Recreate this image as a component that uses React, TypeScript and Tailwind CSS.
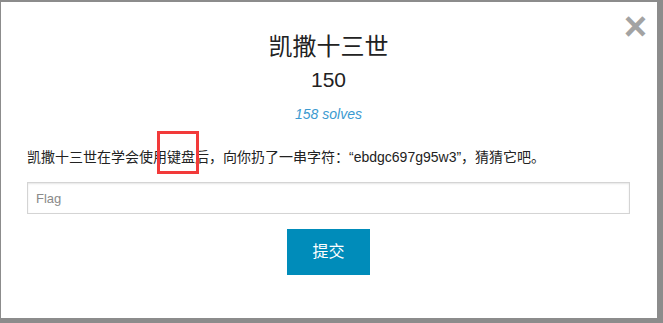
import React from "react";

const fontStack = {
  fontFamily: '"Liberation Sans", "Noto Sans CJK SC", sans-serif',
};

export default function App() {
  return (
    <div
      className="w-[663px] h-[323px] overflow-hidden bg-[#8c8c8c] pt-[2px] pl-px"
      style={fontStack}
    >
      {/* modal */}
      <div className="relative w-[656px] h-[316px] bg-white pt-[30px] pl-[26px] pr-[27px] text-[#222]">
        <button className="absolute top-[4px] right-[10px] text-[40px] leading-none font-bold text-[#a3a3a3] cursor-pointer">
          ×
        </button>

        <h3 className="text-center text-[24px] leading-[30px]">凯撒十三世</h3>
        <p className="mt-[5px] text-center text-[21px] leading-[26px]">150</p>
        <p className="mt-[11px] text-center text-[14px] leading-[20px] italic text-[#3b9ad0]">
          158 solves
        </p>

        <p className="mt-[23px] text-[14px] leading-[20px] text-[#222]">
          凯撒十三世在学会使用键盘后，向你扔了一串字符：“ebdgc697g95w3”，猜猜它吧。
        </p>

        <input
          type="text"
          placeholder="Flag"
          className="mt-[15px] block w-full h-[32px] border border-[#d4d4d4] px-2 text-[13px] shadow-[inset_0_1px_2px_rgba(0,0,0,0.1)] placeholder:text-[#8a8a8a] outline-none"
        />

        <div className="mt-[15px] flex justify-center">
          <button className="w-[83px] h-[46px] bg-[#008cba] text-white text-[16px] flex items-center justify-center">
            提交
          </button>
        </div>

        {/* annotation box */}
        <div className="absolute left-[156px] top-[129px] w-[42px] h-[43px] border-[3px] border-[#f23a3a]" />
      </div>
    </div>
  );
}
